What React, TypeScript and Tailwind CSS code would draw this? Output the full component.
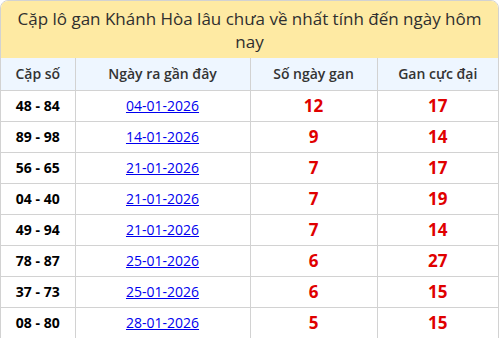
import React from 'react'

const rows = [
  ['48 - 84', '04-01-2026', '12', '17'],
  ['89 - 98', '14-01-2026', '9', '14'],
  ['56 - 65', '21-01-2026', '7', '17'],
  ['04 - 40', '21-01-2026', '7', '19'],
  ['49 - 94', '21-01-2026', '7', '14'],
  ['78 - 87', '25-01-2026', '6', '27'],
  ['37 - 73', '25-01-2026', '6', '15'],
  ['08 - 80', '28-01-2026', '5', '15'],
]

function App() {
  return (
    <div className="w-[500px] bg-white font-['Open_Sans',sans-serif]">
      <div className="w-[499px] border border-[#d2d2d2] rounded-t-lg overflow-hidden">
        <div className="bg-[#feeaa3] h-[57px] pt-[6px] px-3 text-center text-[17px] leading-[23px] font-medium text-[#2f2f2f]">
          Cặp lô gan Khánh Hòa lâu chưa về nhất tính đến ngày hôm nay
        </div>
        <table className="w-full border-collapse table-fixed">
          <colgroup>
            <col className="w-[74px]" />
            <col className="w-[175px]" />
            <col className="w-[127px]" />
            <col />
          </colgroup>
          <thead>
            <tr className="bg-[#eef6ff] h-[32px] text-[14px] font-semibold text-[#333]">
              <th className="border-r border-b border-[#d2d2d2] font-semibold">Cặp số</th>
              <th className="border-r border-b border-[#d2d2d2] font-semibold">Ngày ra gần đây</th>
              <th className="border-r border-b border-[#d2d2d2] font-semibold">Số ngày gan</th>
              <th className="border-b border-[#d2d2d2] font-semibold">Gan cực đại</th>
            </tr>
          </thead>
          <tbody>
            {rows.map((r, i) => (
              <tr key={i} className={'h-[31px] text-center ' + (i < rows.length - 1 ? 'border-b border-[#d2d2d2]' : '')}>
                <td className="border-r border-[#d2d2d2] text-[14px] font-bold text-black">{r[0]}</td>
                <td className="border-r border-[#d2d2d2] text-[14px]">
                  <a href="#" className="text-[#0000ee] underline">{r[1]}</a>
                </td>
                <td className="border-r border-[#d2d2d2] text-[17px] font-bold text-[#e00000]">{r[2]}</td>
                <td className="text-[17px] font-bold text-[#e00000]">{r[3]}</td>
              </tr>
            ))}
          </tbody>
        </table>
      </div>
    </div>
  )
}

export default App
